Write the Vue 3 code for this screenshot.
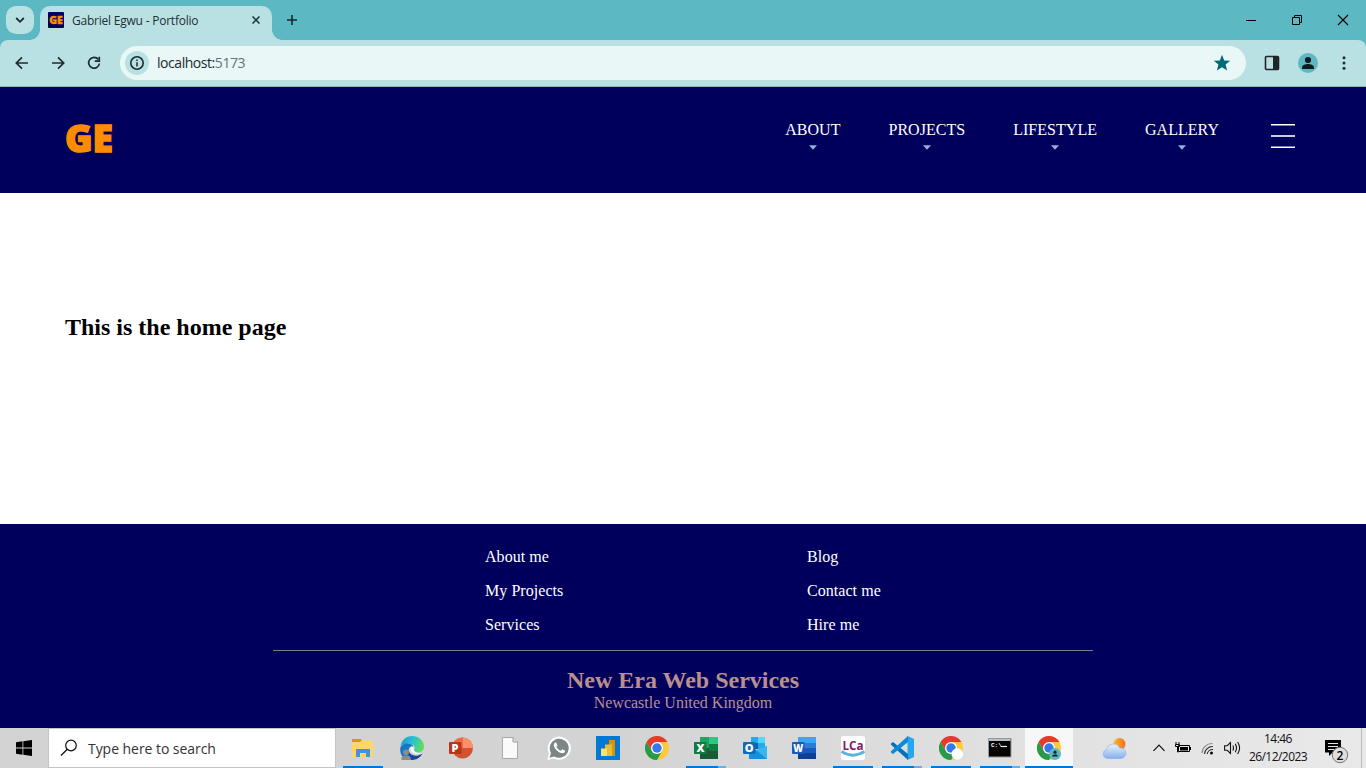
<script setup>
const navItems = ['ABOUT', 'PROJECTS', 'LIFESTYLE', 'GALLERY']
const footerColumns = [
  ['About me', 'My Projects', 'Services'],
  ['Blog', 'Contact me', 'Hire me']
]
const apps = [
  { id: 'explorer', run: 'single' },
  { id: 'edge' },
  { id: 'powerpoint' },
  { id: 'file' },
  { id: 'whatsapp' },
  { id: 'powerbi' },
  { id: 'chrome' },
  { id: 'excel', run: 'multi' },
  { id: 'outlook' },
  { id: 'word' },
  { id: 'lca', run: 'single' },
  { id: 'vscode', run: 'multi' },
  { id: 'chrome-alt', run: 'single' },
  { id: 'cmd', run: 'multi' },
  { id: 'chrome-user', run: 'single', active: true }
]
</script>

<template>
  <div class="screen">
    <div class="tabstrip">
      <div class="tab-search">
        <svg width="10" height="8" viewBox="0 0 10 8"><path d="M1.2 2 5 5.8 8.8 2" fill="none" stroke="#1c2b2e" stroke-width="1.8" /></svg>
      </div>
      <div class="tab">
        <svg class="favicon" width="16" height="16" viewBox="0 0 16 16">
          <rect width="16" height="16" rx="1" fill="#00005c" />
          <text x="1.2" y="11.8" textLength="13.6" lengthAdjust="spacingAndGlyphs" class="ge-small">GE</text>
        </svg>
        <span class="tab-title">Gabriel Egwu - Portfolio</span>
        <svg class="tab-close" width="8" height="8" viewBox="0 0 8 8"><path d="M.5.5l7 7M7.5.5l-7 7" stroke="#1c2b2e" stroke-width="1.5" /></svg>
      </div>
      <svg class="new-tab" width="10" height="10" viewBox="0 0 10 10"><path d="M5 0v10M0 5h10" stroke="#16282b" stroke-width="1.6" /></svg>
      <div class="window-controls">
        <svg width="46" height="40" viewBox="0 0 46 40"><path d="M18 20.500h10" stroke="#000" /></svg>
        <svg width="46" height="40" viewBox="0 0 46 40"><path d="M18.500 17.500h7v7h-7zM20.500 17.500v-2h7v7h-2" fill="none" stroke="#000" /></svg>
        <svg width="46" height="40" viewBox="0 0 46 40"><path d="M18 15l10 10M28 15L18 25" stroke="#000" stroke-width="1.1" /></svg>
      </div>
    </div>

    <div class="toolbar">
      <svg width="36" height="36" viewBox="0 0 36 36"><path d="M24 18H12.800M18 12.300 12.300 18l5.700 5.700" fill="none" stroke="#1c2b2e" stroke-width="1.700" /></svg>
      <svg width="36" height="36" viewBox="0 0 36 36"><path d="M12 18h11.200M18 12.300l5.700 5.700-5.700 5.700" fill="none" stroke="#1c2b2e" stroke-width="1.700" /></svg>
      <svg width="36" height="36" viewBox="0 0 36 36"><path d="M22.300 14.400A5.400 5.400 0 1 0 23.400 18.500" fill="none" stroke="#1c2b2e" stroke-width="1.700" /><path d="M23.300 11.800v4.400h-4.500" fill="none" stroke="#1c2b2e" stroke-width="1.700" /></svg>
      <div class="omnibox">
        <svg width="24" height="24" viewBox="0 0 24 24"><circle cx="12" cy="12" r="12" fill="#b9e1e4" /><circle cx="12" cy="12" r="6.200" fill="none" stroke="#1c2b2e" stroke-width="1.600" /><path d="M12 11.200V15.500M12 8.500V10" stroke="#1c2b2e" stroke-width="1.500" /></svg>
        <span class="url">localhost:<span class="port">5173</span></span>
        <svg width="18" height="18" viewBox="0 0 18 18"><path d="M9 .8l2.200 5.600 6 .4-4.600 3.800 1.500 5.900L9 13.300l-5.100 3.200 1.500-5.900L.8 6.800l6-.4z" fill="#006b75" /></svg>
      </div>
      <div class="tools-right">
        <svg width="36" height="36" viewBox="0 0 36 36"><rect x="11.500" y="11.500" width="13" height="13" rx="1" fill="#b9e1e4" stroke="#202528" stroke-width="1.600" /><rect x="19" y="12" width="6" height="12.500" fill="#202528" /></svg>
        <svg width="36" height="36" viewBox="0 0 36 36"><circle cx="18" cy="18" r="10" fill="#5cb8c2" /><circle cx="18" cy="15" r="3.100" fill="#0d1b1e" /><path d="M12 24v-1.600c0-2.300 3.700-3.400 6-3.400s6 1.100 6 3.400V24z" fill="#0d1b1e" /></svg>
        <svg width="36" height="36" viewBox="0 0 36 36"><g fill="#1c2b2e"><circle cx="18" cy="12.800" r="1.500" /><circle cx="18" cy="18" r="1.500" /><circle cx="18" cy="23.300" r="1.500" /></g></svg>
      </div>
    </div>

    <header class="site-header">
      <svg class="logo" width="50" height="60" viewBox="0 0 50 60"><text x="0" y="43.500" textLength="48" lengthAdjust="spacingAndGlyphs" class="ge-logo">GE</text></svg>
      <nav>
        <a v-for="n in navItems" :key="n">{{ n }}<svg class="caret" width="8" height="5" viewBox="0 0 8 5"><path d="M0 .3h8L4 4.800z" fill="#91b1d8" /></svg></a>
      </nav>
      <svg class="burger" width="24" height="26" viewBox="0 0 24 26"><path d="M0 1.700h24M0 24.300h24" stroke="#fff" stroke-width="1.500" /><path d="M0 13h24" stroke="#cacadd" stroke-width="2" /></svg>
    </header>

    <main><h1>This is the home page</h1></main>

    <footer>
      <div class="links">
        <ul v-for="(c, i) in footerColumns" :key="i">
          <li v-for="l in c" :key="l">{{ l }}</li>
        </ul>
      </div>
      <div class="rule"></div>
      <h2>New Era Web Services</h2>
      <p>Newcastle United Kingdom</p>
    </footer>

    <div class="taskbar">
      <div class="start">
        <svg width="16" height="16" viewBox="0 0 16 16"><path d="M0 2.300 6.500 1.300V7.600H0zM7.300 1.200 16 0V7.600H7.300zM0 8.400H6.500v6.300L0 13.800zM7.300 8.400H16V16l-8.700-1.200z" /></svg>
      </div>
      <div class="search">
        <svg width="18" height="18" viewBox="0 0 18 18"><circle cx="11" cy="6.500" r="5.300" fill="none" stroke="#111" stroke-width="1.200" /><path d="M7.300 10.200 1 16.500" stroke="#111" stroke-width="1.300" /></svg>
        <span>Type here to search</span>
      </div>
      <div class="apps">
        <div v-for="a in apps" :key="a.id" class="app" :class="[a.run, { active: a.active }]">
          <svg width="24" height="24" viewBox="0 0 24 24">
            <template v-if="a.id === 'explorer'">
              <path d="M1 3h9l1 2v3H1z" fill="#d99a09" />
              <path d="M1 6h8l1.500-1.500H22V21H1z" fill="#ffd766" />
              <path d="M5 21v-8h14v8h-4v-4H9v4z" fill="#3b96dc" />
            </template>
            <template v-else-if="a.id === 'edge'">
              <defs>
                <linearGradient id="edge-top" x1="0" x2="1" y1=".2" y2=".5"><stop stop-color="#159bd7" /><stop offset=".5" stop-color="#27c2ce" /><stop offset="1" stop-color="#63dc5c" /></linearGradient>
              </defs>
              <path d="M.5 10.500C1.500 4 6.500 0 12 0c7 0 12 5 12 10.500 0 4-3 6-6 6-2.500 0-4.500-1.200-4-2.500 1.500-2 .5-5.500-3.500-6C5.500 7.500 2 8.500.5 10.500z" fill="url(#edge-top)" />
              <path d="M.2 13C.3 9.500 4 7.600 7.500 7.600c3 0 5 1.200 6 2.900-2-.8-5 .7-5 4 0 4.500 4.500 7.500 9 6C12.500 26-.2 24.500.2 13z" fill="#1477c9" />
              <path d="M8.500 14c.5 4 5 6.500 9.500 5.500 2-.4 3.200-1.300 4.500-2C20 22 16 24 11.500 24 9 22 7.500 18 8.500 14z" fill="#12489c" />
              <path d="M11 10.500c-1.500 3 .5 6.500 4.500 7.300 2.500.5 5 0 7-1-3 .6-6.500 0-8-1.800-1-1.300-.5-2.200-.7-3.200z" fill="#eef6f9" />
              <circle cx="6" cy="16.300" r="2.900" fill="#8c8c8c" /><path d="M1.500 24v-2.300c0-2.800 9-2.800 9 0V24z" fill="#8c8c8c" />
            </template>
            <template v-else-if="a.id === 'powerpoint'">
              <circle cx="13.500" cy="12" r="10.500" fill="#d35230" /><path d="M13.500 1.500A10.500 10.500 0 0 1 24 12H13.500z" fill="#ff8f6b" /><path d="M3 12a10.500 10.500 0 0 1 10.500-10.500V12z" fill="#ed6c47" />
              <rect y="6" width="12.500" height="12" rx="1" fill="#b7361b" /><text x="2.600" y="16" class="tile">P</text>
            </template>
            <template v-else-if="a.id === 'file'">
              <path d="M4.500 1.500h10.500l4.500 4.500v16.500h-15z" fill="#fafafa" stroke="#a9a9a9" /><path d="M15 1.500V6h4.500" fill="#ddd" stroke="#a0a0a0" />
            </template>
            <template v-else-if="a.id === 'whatsapp'">
              <path d="M.3 24 2 17.500A11.600 11.600 0 1 1 7 22.500z" fill="#fff" />
              <path d="M2.500 21.700 4 17a9.500 9.500 0 1 1 3.400 3.400z" fill="#7e8586" />
              <path d="M8 6.500c-2 1.500-1.500 4.500 1.500 7.500s6 4.200 8 2.500c.8-.8.600-1.800.3-2l-2.500-1.200-1.500 1.500c-2-.7-3.500-2-4.300-3.800l1-1.300-1.200-3c-.3-.3-.9-.4-1.300-.2z" fill="#fff" />
            </template>
            <template v-else-if="a.id === 'powerbi'">
              <rect width="24" height="24" fill="#0078d4" /><rect x="13" y="4" width="6" height="16" rx=".7" fill="#d89500" /><path d="M9 8.500h7V20H9z" fill="#edbc37" /><path d="M5 12.500h6V20H5z" fill="#ffdf72" />
            </template>
            <template v-else-if="a.id.startsWith('chrome')">
              <circle cx="12" cy="12" r="12" fill="#ffca3a" />
              <path d="M1.600 6A12 12 0 0 1 22.400 6H12L6.800 15z" fill="#e33b2e" />
              <path d="M1.600 6A12 12 0 0 0 12 24l5.200-9L6.800 15z" fill="#269b4c" />
              <circle cx="12" cy="12" r="6" fill="#fff" /><circle cx="12" cy="12" r="4.700" fill="#3479eb" />
              <circle v-if="a.id === 'chrome-alt'" cx="18.300" cy="18" r="5.800" fill="#fff" />
              <g v-if="a.id === 'chrome-user'"><circle cx="18" cy="18" r="6" fill="#5cb8c2" /><circle cx="18" cy="16.200" r="1.600" fill="#123" /><path d="M15.300 20.500v-.8c0-1.700 5.400-1.700 5.400 0v.8z" fill="#123" /></g>
            </template>
            <template v-else-if="a.id === 'excel'">
              <path d="M6 1h9v22H6z" fill="#21a366" /><path d="M15 1h9v7h-9z" fill="#33c481" /><path d="M15 8h9v7h-9z" fill="#107c41" /><path d="M6 12h9v11H6zM15 15h9v8h-9z" fill="#185c37" />
              <rect y="6" width="12.500" height="12" rx="1" fill="#107c41" /><text x="2.400" y="16" class="tile">X</text>
            </template>
            <template v-else-if="a.id === 'outlook'">
              <path d="M8 1h14v12H8z" fill="#28a8ea" /><path d="M15 1h7v6h-7z" fill="#50d9ff" /><path d="M8 7h7v6H8z" fill="#0364b8" /><path d="M6 10l9 5 9-5v13H6z" fill="#1490df" /><path d="M24 10v13L13 14z" fill="#35b8f1" />
              <rect y="6" width="12.500" height="12" rx="1" fill="#0f6cbd" /><text x="1.800" y="16" class="tile">O</text>
            </template>
            <template v-else-if="a.id === 'word'">
              <path d="M6 1h18v6H6z" fill="#41a5ee" /><path d="M6 7h18v5H6z" fill="#2b7cd3" /><path d="M6 12h18v5H6z" fill="#185abd" /><path d="M6 17h18v6H6z" fill="#103f91" />
              <rect y="6" width="12.500" height="12" rx="1" fill="#185abd" /><text x="1.300" y="16" class="tile" textLength="10" lengthAdjust="spacingAndGlyphs">W</text>
            </template>
            <template v-else-if="a.id === 'lca'">
              <rect width="24" height="24" rx="2" fill="#fff" /><text x="1.500" y="13.500" class="lca" textLength="21" lengthAdjust="spacingAndGlyphs">LCa</text><path d="M.5 15.500Q12 23 23.500 15.500" fill="none" stroke="#5ab2dd" stroke-width="2.800" />
            </template>
            <template v-else-if="a.id === 'vscode'">
              <path d="M17.500 0 24 3v18l-6.500 3z" fill="#26a5f1" /><path d="M1 7.500 3 6l15 12v6L.8 8.500z" fill="#0072bb" /><path d="M1 16.500 3 18 18 6V0L.8 15.500z" fill="#078bd2" />
            </template>
            <template v-else-if="a.id === 'cmd'">
              <rect x=".5" y="2.500" width="22.500" height="18.500" fill="#050505" stroke="#999" /><path d="M1 3h21.500v2H1z" fill="#b8bfc6" /><text x="3" y="11" class="cmd">C:\</text><path d="M13 10.500h6" stroke="#eee" stroke-width="1.200" />
            </template>
          </svg>
        </div>
      </div>
      <svg class="weather" width="25" height="22" viewBox="0 0 25 22">
        <defs><linearGradient id="cloud" x2="0" y2="1"><stop stop-color="#edf3fd" /><stop offset="1" stop-color="#83b0ef" /></linearGradient><linearGradient id="sun"><stop stop-color="#ffbd1b" /><stop offset="1" stop-color="#f36a2a" /></linearGradient></defs>
        <circle cx="17.500" cy="6" r="6" fill="url(#sun)" />
        <path d="M5 20.500a4.600 4.600 0 0 1-.3-9A7 7 0 0 1 17.800 10a5.300 5.300 0 0 1 1.700 10.500z" fill="url(#cloud)" stroke="#8aaee0" stroke-width=".6" />
      </svg>
      <div class="tray">
        <svg width="12" height="8" viewBox="0 0 12 8"><path d="M.5 6.800 6 1.200l5.500 5.600" fill="none" stroke="#111" stroke-width="1.200" /></svg>
        <svg width="16" height="12" viewBox="0 0 16 12"><path d="M3.500 3.500h11v6h-11zM15.500 5v3M1 0v2M4 0v2M.5 2.500h4v2h-4zM2.500 4v6h1" fill="none" stroke="#000" /><path d="M5 5h8v3.500H5z" /></svg>
        <svg width="13" height="13" viewBox="0 0 13 13"><g fill="none" stroke="#222" stroke-width="1.100"><path d="M1 11A10 10 0 0 1 11.500 1.500" stroke="#888" /><path d="M3.500 12A8 8 0 0 1 11.800 4.500M6.200 12a5.500 5.500 0 0 1 5.800-4.500" /></g><circle cx="10.500" cy="11" r="1.500" /></svg>
        <svg width="17" height="14" viewBox="0 0 17 14"><path d="M.6 4.700h2.600L6.500 1.500v11L3.200 9.300H.6zM8.800 4.500q1.400 2.500 0 5M11.200 2.800q2.600 4.200 0 8.400M13.600 1q4 6 0 12" fill="none" stroke="#111" stroke-width="1.100" /></svg>
      </div>
      <div class="clock"><span>14:46</span><span>26/12/2023</span></div>
      <svg class="notify" width="26" height="26" viewBox="0 0 26 26">
        <path d="M1 2h16v12.500H8.500L5 18v-3.500H1z" /><path d="M4 5.500h10M4 8.500h10M4 11.500h6" stroke="#e5e5e5" stroke-width="1.200" />
        <circle cx="16" cy="17" r="7.700" fill="#dedede" stroke="#777" /><text x="12.500" y="21.500" class="count">2</text>
      </svg>
      <div class="show-desktop"></div>
    </div>
  </div>
</template>

<style>
html, body { margin: 0; overflow: hidden; }
</style>

<style scoped>
* { box-sizing: border-box; }
.screen { width: 1366px; height: 768px; display: flex; flex-direction: column; background: linear-gradient(#5cb8c2 60px, #fff 60px); font-family: "Liberation Serif", serif; overflow: hidden; }
svg { display: block; flex: none; }
.tabstrip { height: 40px; flex: none; background: #5cb8c2; display: flex; padding-left: 6px; }
.tab-search { width: 28px; height: 28px; margin-top: 6px; border-radius: 10px; background: #b9e1e4; display: flex; align-items: center; justify-content: center; }
.tab { position: relative; width: 232px; height: 34px; margin: 6px 0 0 6px; padding: 0 12px 5px 8px; border-radius: 10px 10px 0 0; background: #b9e1e4; display: flex; align-items: center; }
.tab::before, .tab::after { content: ""; position: absolute; bottom: 0; width: 10px; height: 10px; }
.tab::before { left: -10px; background: radial-gradient(circle at 0 0, transparent 9.500px, #b9e1e4 10px); }
.tab::after { right: -10px; background: radial-gradient(circle at 100% 0, transparent 9.500px, #b9e1e4 10px); }
.favicon { margin-top: -1px; }
.tab-close { margin-top: -1px; }
.tab-title { margin-left: 8px; flex: 1; font: 12px "Open Sans", sans-serif; letter-spacing: -.22px; color: #1f2f32; white-space: nowrap; }
.new-tab { margin: 15px 0 0 15px; }
.window-controls { margin-left: auto; display: flex; }
.toolbar { height: 47px; flex: none; display: flex; align-items: center; padding: 0 4px 1px; background: #b9e1e4; border-bottom: 1px solid #93b4b6; border-radius: 8px 8px 0 0; }
.omnibox { width: 1126px; height: 34px; margin-left: 8px; border-radius: 17px; background: #eaf7f7; display: flex; align-items: center; padding: 0 15px 0 5px; }
.url { flex: 1; margin-left: 8px; font: 14px "Open Sans", sans-serif; letter-spacing: -.45px; color: #1c2b2e; }
.port { color: #667274; }
.tools-right { display: flex; margin-left: 8px; }
.ge-small { font: 800 10px "Open Sans", sans-serif; fill: #ff8c00; stroke: #ff8c00; stroke-width: .4px; }
.ge-logo { font: 800 36.500px "Open Sans", sans-serif; fill: #ff8c00; stroke: #ff8c00; stroke-width: 1.400px; }
.site-header { height: 106px; flex: none; background: #00005c; display: flex; padding: 0 71px 0 65px; color: #fff; }
.logo { margin-top: 21px; overflow: visible; }
nav { margin-left: auto; display: flex; gap: 48px; padding-top: 34px; font-size: 16px; line-height: 18px; letter-spacing: .03px; }
nav a { display: flex; flex-direction: column; align-items: center; }
.caret { margin-top: 6px; }
.burger { margin: 36px 0 0 52px; }
main { height: 331px; flex: none; background: #fff; padding: 120px 65px 0; }
h1 { margin: 0; font-size: 24px; line-height: 28px; color: #000; }
footer { height: 204px; flex: none; background: #00005c; color: #fff; padding-top: 16px; text-align: center; }
.links { display: flex; padding-left: 485px; }
ul { list-style: none; margin: 0; padding: 0; width: 322px; text-align: left; }
li { height: 34px; line-height: 34px; font-size: 16px; letter-spacing: .05px; }
.rule { width: 820px; height: 1px; margin: 8px auto 0; background: #808080; }
h2 { margin: 15px 0 0; font-size: 24px; line-height: 28px; color: #bc8f8f; }
p { margin: 0; font-size: 16px; line-height: 18px; color: #bc8f8f; }
.taskbar { height: 40px; flex: none; display: flex; background: linear-gradient(90deg, #d3d3d3 45%, #dfdfdf 70%, #e9e9e9); }
.start { width: 48px; display: flex; align-items: center; justify-content: center; }
.search { width: 288px; height: 40px; border: 1px solid #c3c3c3; background: #fff; display: flex; align-items: center; padding-left: 11px; font: 14px "Open Sans", sans-serif; letter-spacing: -.05px; color: #333; }
.search span { margin-left: 10px; white-space: nowrap; }
.apps { display: flex; gap: 1px; margin-left: 3px; }
.app { width: 48px; height: 40px; display: flex; justify-content: center; padding-top: 8px; position: relative; }
.active { background: #f7f7f7; }
.single::after, .multi::after { content: ""; position: absolute; left: 4px; right: 4px; bottom: 0; height: 2px; background: #0078d7; }
.multi::after { background: linear-gradient(90deg, #0078d7 80%, #66afea 80%); }
.active::after { left: 0; right: 0; }
.tile { font: 800 11px "Open Sans", sans-serif; fill: #fff; }
.lca { font: bold 13px "Open Sans", sans-serif; fill: #831b65; }
.cmd { font: bold 6px "Liberation Mono", monospace; fill: #fff; }
.weather { margin: 10px 0 0 29px; }
.tray { display: flex; align-items: center; margin-left: 26px; gap: 10px; }
.clock { width: 62px; margin-left: 6px; padding-top: 2px; display: flex; flex-direction: column; align-items: center; font: 12px/18px "Open Sans", sans-serif; letter-spacing: -.55px; color: #111; white-space: nowrap; }
.notify { margin: 10px 0 0 15px; }
.count { font: 600 12px "Open Sans", sans-serif; }
.show-desktop { margin-left: auto; width: 5px; border-left: 1px solid #bbb; }
</style>
